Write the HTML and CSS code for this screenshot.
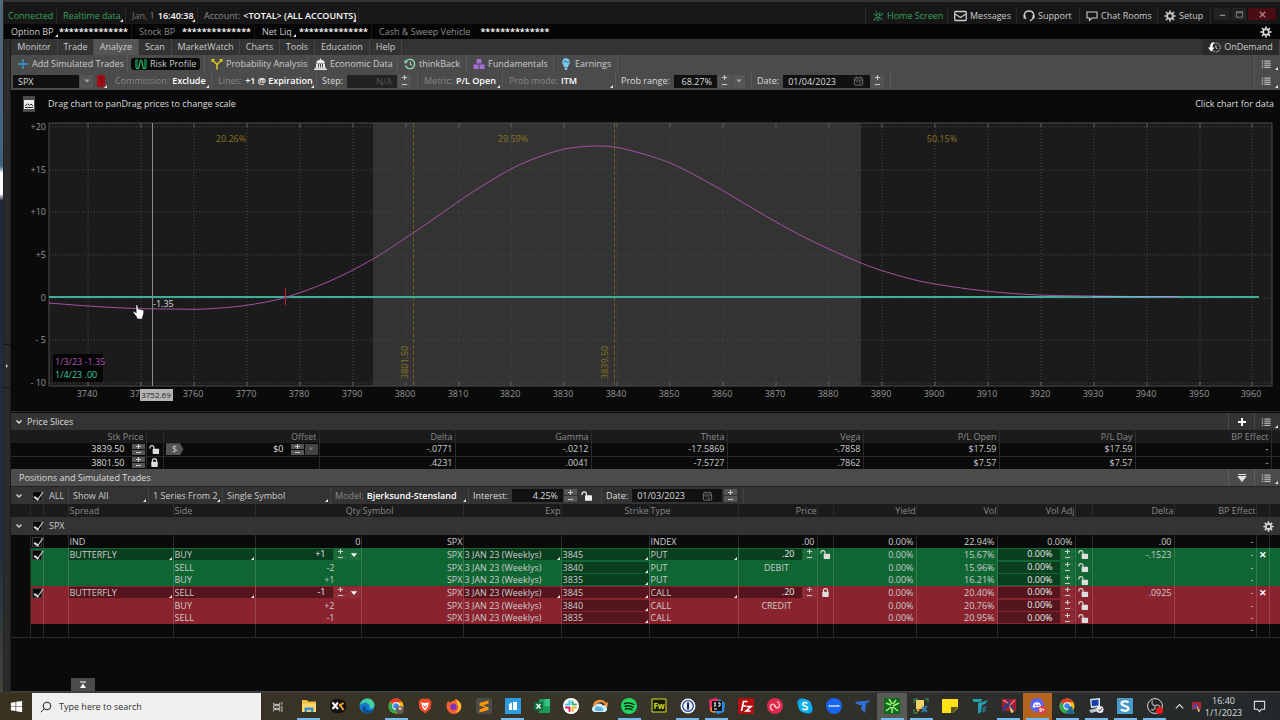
FILE: index.html
```html
<!DOCTYPE html>
<html lang="en">
<head>
    <meta charset="UTF-8">
    <meta name="viewport" content="width=device-width, initial-scale=1.0">
    <title>Risk Profile</title>
    <link rel="stylesheet" href="styles.css">
</head>
<body>
    <svg class="defs" width="0" height="0" aria-hidden="true">
        <symbol id="i-list" viewBox="0 0 12 12"><path d="M1 2.500h1.600M1 5h1.600M1 7.500h1.600M1 10h1.600M4 2.500h7.500M4 5h7.500M4 7.500h7.500M4 10h7.500" stroke="currentColor" stroke-width="1.100"/></symbol>
        <symbol id="i-gear" viewBox="0 0 12 12"><circle cx="6" cy="6" r="2.900" fill="none" stroke="currentColor" stroke-width="1.800"/><path d="M6 .4v2M6 9.600v2M.4 6h2M9.600 6h2M2 2l1.500 1.500M8.500 8.500L10 10M2 10l1.500-1.500M8.500 3.500L10 2" stroke="currentColor" stroke-width="1.700"/></symbol>
        <symbol id="i-lock" viewBox="0 0 12 12"><path d="M3.700 6V4a2.300 2.300 0 0 1 4.600 0v2" fill="none" stroke="currentColor" stroke-width="1.300"/><rect x="2.500" y="5.300" width="7" height="5.500" rx=".6" fill="currentColor"/></symbol>
        <symbol id="i-unlock" viewBox="0 0 12 12"><path d="M1 5V4a2.200 2.200 0 0 1 4.400 0v2" fill="none" stroke="currentColor" stroke-width="1.200"/><rect x="4" y="5.300" width="7" height="5.500" rx=".6" fill="currentColor"/></symbol>
        <symbol id="i-cal" viewBox="0 0 12 12"><rect x="1.500" y="2.500" width="9" height="8" rx="1" fill="none" stroke="currentColor"/><path d="M1.500 5h9M3.500 1v2M8.500 1v2M3.500 7h2M6.500 7h2M6.500 9h2" stroke="currentColor"/></symbol>
        <symbol id="i-down" viewBox="0 0 8 8"><path d="M1.500 2.500h5L4 5.500z" fill="currentColor"/></symbol>
        <symbol id="i-chev" viewBox="0 0 8 8"><path d="M1.500 2.500L4 5l2.500-2.500" fill="none" stroke="currentColor" stroke-width="1.500"/></symbol>
        <symbol id="i-spark" viewBox="0 0 12 12"><path d="M6 6.500V11M7 6l4-2M7 7.500l3.500 2M5 7l-3.500 3.500M5 5.500L1.500 4M5.500 4.500L4 1M6.800 4.500L8.500 2" stroke="currentColor" stroke-width="1.200" stroke-dasharray="2 .6" fill="none"/></symbol>
        <symbol id="i-chrome" viewBox="0 0 16 16"><circle cx="8" cy="8" r="7.500" fill="#fbc116"/><path d="M8 8L1.500 4.300A7.500 7.500 0 0 1 14.500 4.300H8z" fill="#e33b2e"/><path d="M8 8L1.500 4.300A7.500 7.500 0 0 0 7.500 15.500L11 9.500z" fill="#2da94f"/><circle cx="8" cy="8" r="3.700" fill="#fff"/><circle cx="8" cy="8" r="2.800" fill="#4285f4"/></symbol>
    </svg>

    <div class="shell">
        <div class="desktop-edge"></div>
        <div class="app">
            <header class="bar status-bar">
                <span class="cell green">Connected</span>
                <button class="cell drop green">Realtime data</button>
                <button class="cell drop dim">Jan, 1 <b>16:40:38</b></button>
                <button class="cell drop mid">Account: <b>&lt;TOTAL&gt; (ALL ACCOUNTS)</b></button>
                <span class="cell"></span>
                <button class="cell green"><svg class="icon"><use href="#i-spark"/></svg>Home Screen</button>
                <button class="cell"><svg class="icon icon-wide" viewBox="0 0 13 11"><rect x=".7" y="1" width="11.600" height="9" rx="1" fill="none" stroke="currentColor" stroke-width="1.300"/><path d="M1 3.500l5.500 3.500L12 3.500" fill="none" stroke="currentColor" stroke-width="1.300"/></svg>Messages</button>
                <button class="cell"><svg class="icon" viewBox="0 0 12 12"><path d="M3 9C0 6 1 1 6 1s6 5 3.500 8L7 11" fill="none" stroke="currentColor" stroke-width="1.300"/><path d="M1.500 5v3.500M10.500 5v3.500" stroke="currentColor" stroke-width="2"/></svg>Support</button>
                <button class="cell"><svg class="icon" viewBox="0 0 12 12"><path d="M1 2h10v6H6L3.500 10.500V8H1z" fill="none" stroke="currentColor" stroke-width="1.100"/></svg>Chat Rooms</button>
                <button class="cell"><svg class="icon"><use href="#i-gear"/></svg>Setup</button>
                <div class="window-buttons">
                    <button aria-label="Minimize"><svg viewBox="0 0 10 10"><path d="M2 6h6" stroke="currentColor" stroke-width="1.500"/></svg></button>
                    <button aria-label="Maximize"><svg viewBox="0 0 10 10"><path d="M1.500 2h7v6h-7z M1.500 3h7" fill="none" stroke="currentColor"/></svg></button>
                    <button class="close" aria-label="Close"><svg viewBox="0 0 10 10"><path d="M2 2l6 6M8 2L2 8" stroke="currentColor" stroke-width="1.500"/></svg></button>
                </div>
            </header>

            <div class="bar balance-bar">
                <button class="cell"><span class="drop">Option BP</span><b>**************</b></button>
                <span class="cell mid"><span>Stock BP</span><b>**************</b></span>
                <button class="cell"><span class="drop">Net Liq</span><b>**************</b></button>
                <span class="cell mid last"><span>Cash &amp; Sweep Vehicle</span><b>**************</b></span>
                <button class="bare" aria-label="Balance settings"><svg class="icon"><use href="#i-gear"/></svg></button>
            </div>

            <div class="workspace">
                <aside class="gutter"><button aria-label="Expand sidebar"><svg viewBox="0 0 4 6"><path d="M1 1l2 2-2 2z" fill="#ccc"/></svg></button></aside>
                <main class="main">
                    <nav class="bar menu-bar">
                        <a href="#">Monitor</a>
                        <a href="#">Trade</a>
                        <a href="#" class="active">Analyze</a>
                        <a href="#">Scan</a>
                        <a href="#">MarketWatch</a>
                        <a href="#">Charts</a>
                        <a href="#">Tools</a>
                        <a href="#">Education</a>
                        <a href="#">Help</a>
                        <span></span>
                        <a href="#" class="ondemand"><svg class="icon icon-wide" viewBox="0 0 14 12"><circle cx="8.500" cy="6.500" r="4.800" fill="none" stroke="currentColor" stroke-dasharray="2 .7"/><path d="M8.500 4v3l2 1" fill="none" stroke="currentColor"/><path d="M7 .5C3.500.5 2 3.500 2.300 6.500H0l3.500 4.500L7 6.500H5C4.800 4 5.500 2 7 .5z" fill="#fff"/></svg>OnDemand</a>
                    </nav>

                    <nav class="bar sub-tabs">
                        <button class="cell"><svg class="icon" viewBox="0 0 12 12"><path d="M6 1v10M1 6h10" stroke="#2f9fd0" stroke-width="1.400"/></svg>Add Simulated Trades</button>
                        <div class="cell pill-cell"><button class="pill"><svg class="icon" viewBox="0 0 12 12"><path d="M0 1h3v9H0zM9 1h3v9H9z" fill="#0e6b35"/><path d="M1 10.500h2.500C5 8 4.500 2 6 2s1 6 2.500 8.500H11" fill="none" stroke="#28c066" stroke-width="1.200"/></svg>Risk Profile</button></div>
                        <button class="cell"><svg class="icon" viewBox="0 0 12 12"><path d="M6 11.500V6.500L2 2.500M6 6.500l4-4" fill="none" stroke="#e3d021" stroke-width="1.500"/><path d="M.5 4.500V1H4zM11.500 4.500V1H8z" fill="#e3d021"/></svg>Probability Analysis</button>
                        <button class="cell"><svg class="icon icon-wide" viewBox="0 0 13 12"><path d="M2 5.500C2 3 4 2 6 1.700V.5h1v1.200C9 2 11 3 11 5.500zM2 6h2v3.500H2zM5 6h1v3.500H5zM7 6h1v3.500H7zM9 6h2v3.500H9zM1 9.500h11v1H1zM0 10.800h13V12H0z" fill="#e8e8e8"/></svg>Economic Data</button>
                        <button class="cell"><svg class="icon" viewBox="0 0 12 12"><path d="M2 3.500A4.700 4.700 0 1 1 1.500 7.500" fill="none" stroke="#8fd8b2" stroke-width="1.400"/><path d="M6.300 3.500v3l2 1" fill="none" stroke="#8fd8b2" stroke-width="1.200"/><path d="M.3 2l.5 4L4 4z" fill="#8fd8b2"/></svg>thinkBack</button>
                        <button class="cell"><svg class="icon" viewBox="0 0 12 12"><path d="M3.500 1h5v4.500h-5zM.5 6.500h5V11h-5zM6.500 6.500h5V11h-5z" fill="#a56edb"/></svg>Fundamentals</button>
                        <button class="cell"><svg class="icon" viewBox="0 0 12 12"><path d="M6 0a4.300 4.300 0 0 1 2.500 7.500L8 9H4l-.5-1.500A4.300 4.300 0 0 1 6 0zM4.500 9.500h3v1L6.800 12H5.200l-.7-1.500z" fill="#7cc6e8"/><path d="M3.500 4l2-1 2 1.500L9 3.500" fill="none" stroke="#256b91"/></svg>Earnings</button>
                        <span class="cell"></span>
                        <button class="bare drop" aria-label="Tab menu"><svg class="icon list"><use href="#i-list"/></svg></button>
                    </nav>

                    <div class="bar tools">
                        <div class="combo">
                            <input class="field grow" value="SPX" aria-label="Symbol">
                            <button class="box-button" aria-label="Symbol list"><svg class="mini"><use href="#i-down"/></svg></button>
                        </div>
                        <div class="cell link-cell drop"><button class="link-badge">1</button></div>
                        <label class="cell drop faint">Commission:<select class="strong"><option>Exclude</option></select></label>
                        <label class="cell drop faint">Lines:<select class="strong"><option>+1 @ Expiration</option></select></label>
                        <div class="cell tight">
                            <label for="step">Step:</label>
                            <input id="step" class="field num grow disabled" value="N/A" disabled>
                            <span class="spin"><button class="plus" aria-label="Increase"></button><button class="minus" aria-label="Decrease"></button></span>
                        </div>
                        <label class="cell drop faint">Metric:<select class="strong"><option>P/L Open</option></select></label>
                        <label class="cell drop faint">Prob mode:<select class="strong"><option>ITM</option></select></label>
                        <div class="cell tight">
                            <label for="range">Prob range:</label>
                            <input id="range" class="field num grow" value="68.27%">
                            <span class="spin"><button class="plus" aria-label="Increase"></button><button class="minus" aria-label="Decrease"></button></span>
                            <button class="box-button" aria-label="Range list"><svg class="mini"><use href="#i-down"/></svg></button>
                        </div>
                        <div class="cell tight">
                            <label for="date-top">Date:</label>
                            <span class="date-field grow"><input id="date-top" class="field" value="01/04/2023"><svg class="icon cal"><use href="#i-cal"/></svg></span>
                            <span class="spin"><button class="plus" aria-label="Increase"></button><button class="minus" aria-label="Decrease"></button></span>
                        </div>
                        <span class="cell"></span>
                        <button class="bare drop" aria-label="Chart menu"><svg class="icon list"><use href="#i-list"/></svg></button>
                    </div>

                    <section class="chart-panel">
                        <div class="chart-hints">
                            <button class="bare shot" aria-label="Snapshot"><svg viewBox="0 0 12 16"><rect width="12" height="16" fill="#4a4a4a"/><rect x="1" y="4" width="10" height="9" fill="#eee"/><path d="M2 10l2.500-2 2 1.500L8 8l2 2" fill="none" stroke="#222"/><path d="M2 11.500h8" stroke="#222"/></svg></button>
                            <span class="grow">Drag chart to panDrag prices to change scale</span>
                            <span>Click chart for data</span>
                        </div>
                        <svg class="chart" viewBox="11 118 1269 293" role="img" aria-label="Profit and loss by underlying price">
                            <rect x="49" y="123" width="1223" height="263" fill="#1b1b1b"/>
                            <rect x="373" y="123" width="488" height="263" fill="#333"/>
                            <g id="grid"></g>
                            <rect x="49" y="123" width="1223" height="263" fill="none" stroke="#4d4d4d"/>
                            <g class="prob">
                                <path d="M413.500 123v263M614.500 123v263" stroke="#6e5c18" stroke-dasharray="4 2"/>
                                <text x="231" y="142" text-anchor="middle">20.26%</text>
                                <text x="513" y="142" text-anchor="middle">29.59%</text>
                                <text x="942" y="142" text-anchor="middle">50.15%</text>
                                <text transform="translate(408 379) rotate(-90)">3801.50</text>
                                <text transform="translate(608 379) rotate(-90)">3839.50</text>
                            </g>
                            <path d="M49 297h1210" stroke="#3fae97" stroke-width="2"/>
                            <path id="curve" fill="none" stroke="#a352a6"/>
                            <path d="M1092 296.500h86" stroke="#86a6d8"/>
                            <path d="M285.500 288v17" stroke="#c81e2e"/>
                            <path d="M152.500 123v263" stroke="#8a8a8a"/>
                            <text class="readout" x="153" y="307">-1.35</text>
                            <rect x="53" y="354" width="50" height="28" rx="2" fill="#050505"/>
                            <text x="55" y="365" fill="#b455b8">1/3/23 -1.35</text>
                            <text x="55" y="378" fill="#3fcaa6">1/4/23 .00</text>
                            <g id="axis" class="axis"></g>
                            <rect x="140" y="389" width="33" height="12" fill="#b5b5b5"/>
                            <text class="tag" x="156" y="398" text-anchor="middle">3752.69</text>
                            <path d="M136 305c1.500-.5 2 .5 2.200 4l5 1c1 .5.500 4-.7 7l-.3 2h-5l-.5-2-3.500-4.500c0-1.500 1.500-1 3 .5z" fill="#fff" stroke="#111" stroke-width=".5"/>
                        </svg>
                    </section>

                    <section>
                        <div class="bar section-head dark">
                            <svg class="mini"><use href="#i-chev"/></svg>
                            <h2>Price Slices</h2>
                            <button class="bare" aria-label="Add slice"><svg class="icon" viewBox="0 0 12 12"><path d="M6 2v8M2 6h8" stroke="#fff" stroke-width="2"/></svg></button>
                            <button class="bare drop" aria-label="Slices menu"><svg class="icon list"><use href="#i-list"/></svg></button>
                        </div>
                        <table class="slices">
                            <colgroup><col class="c135"><col class="c17"><col class="c156"><col class="c136"><col class="c136"><col class="c136"><col class="c136"><col class="c136"><col class="c136"><col class="c136"><col class="c9"></colgroup>
                            <thead>
                                <tr><th>Stk Price</th><th></th><th>Offset</th><th>Delta</th><th>Gamma</th><th>Theta</th><th>Vega</th><th>P/L Open</th><th>P/L Day</th><th>BP Effect</th><th></th></tr>
                            </thead>
                            <tbody>
                                <tr>
                                    <td><div class="edit"><input class="plain num grow" value="3839.50" aria-label="Stock price 1"><span class="spin"><button class="plus" aria-label="Increase"></button><button class="minus" aria-label="Decrease"></button></span></div></td>
                                    <td class="mark"><svg class="icon"><use href="#i-unlock"/></svg></td>
                                    <td><div class="edit"><button class="dollar">$</button><input class="plain num grow" value="$0" aria-label="Offset"><span class="spin"><button class="plus" aria-label="Increase"></button><button class="minus" aria-label="Decrease"></button></span><button class="box-button" aria-label="Offset list"><svg class="mini"><use href="#i-down"/></svg></button></div></td>
                                    <td>-.0771</td><td>-.0212</td><td>-17.5869</td><td>-.7858</td><td>$17.59</td><td>$17.59</td><td>-</td><td></td>
                                </tr>
                                <tr>
                                    <td><div class="edit"><input class="plain num grow" value="3801.50" aria-label="Stock price 2"><span class="spin"><button class="plus" aria-label="Increase"></button><button class="minus" aria-label="Decrease"></button></span></div></td>
                                    <td class="mark"><svg class="icon"><use href="#i-lock"/></svg></td>
                                    <td></td>
                                    <td>.4231</td><td>.0041</td><td>-7.5727</td><td>.7862</td><td>$7.57</td><td>$7.57</td><td>-</td><td></td>
                                </tr>
                            </tbody>
                        </table>
                    </section>

                    <section class="positions">
                        <div class="bar section-head">
                            <h2>Positions and Simulated Trades</h2>
                            <button class="bare" aria-label="Collapse"><svg class="icon" viewBox="0 0 12 12"><path d="M2 2.500h8M2 4.500L6 9.500l4-5z" fill="currentColor" stroke="currentColor"/></svg></button>
                            <button class="bare drop" aria-label="Positions menu"><svg class="icon list"><use href="#i-list"/></svg></button>
                        </div>
                        <div class="bar filters">
                            <label class="cell all"><svg class="mini"><use href="#i-chev"/></svg><input type="checkbox" checked>ALL</label>
                            <div class="cell drop"><select aria-label="Show"><option>Show All</option></select></div>
                            <div class="cell drop"><select aria-label="Series"><option>1 Series From 2</option></select></div>
                            <div class="cell drop"><select aria-label="Symbols"><option>Single Symbol</option></select></div>
                            <label class="cell drop faint">Model:<select class="strong"><option>Bjerksund-Stensland</option></select></label>
                            <div class="cell tight">
                                <label for="interest">Interest:</label>
                                <input id="interest" class="field num grow" value="4.25%">
                                <span class="spin"><button class="plus" aria-label="Increase"></button><button class="minus" aria-label="Decrease"></button></span>
                                <button class="lock-button" aria-label="Lock interest"><svg class="icon"><use href="#i-unlock"/></svg></button>
                            </div>
                            <div class="cell tight">
                                <label for="date-pos">Date:</label>
                                <span class="date-field grow"><input id="date-pos" class="field" value="01/03/2023"><svg class="icon cal"><use href="#i-cal"/></svg></span>
                                <span class="spin"><button class="plus" aria-label="Increase"></button><button class="minus" aria-label="Decrease"></button></span>
                            </div>
                        </div>
                        <table class="legs">
                            <colgroup><col class="c19"><col class="c13"><col class="c25"><col class="c105"><col class="c82"><col class="c106"><col class="c102"><col class="c98"><col class="c88"><col class="c89"><col class="c79"><col class="c16"><col class="c83"><col class="c81"><col class="c78"><col class="c17"><col class="c82"><col class="c82"><col class="c13"><col class="c11"></colgroup>
                            <thead>
                                <tr><th></th><th></th><th></th><th class="left">Spread</th><th class="left">Side</th><th>Qty</th><th class="left">Symbol</th><th>Exp</th><th>Strike</th><th class="left">Type</th><th>Price</th><th></th><th>Yield</th><th>Vol</th><th>Vol Adj</th><th></th><th>Delta</th><th>BP Effect</th><th></th><th></th></tr>
                            </thead>
                            <tbody id="legs"></tbody>
                        </table>
                        <div class="bottom">
                            <button class="expand" aria-label="Expand panel"><svg viewBox="0 0 12 10"><path d="M3 2h6" stroke="#fff"/><path d="M6 3.500L9 8H3z" fill="#fff"/></svg></button>
                        </div>
                    </section>
                </main>
            </div>
        </div>
    </div>

    <footer class="taskbar">
        <button class="start" aria-label="Start"><svg viewBox="0 0 16 16"><path d="M2 4l5-.8v4.500H2zM7.700 3l6.300-1v5.700H7.700zM2 8.300h5v4.500L2 12zM7.700 8.300H14V14l-6.300-1z" fill="#fff"/></svg></button>
        <label class="search">
            <svg viewBox="0 0 12 12"><circle cx="7" cy="5" r="3.800" fill="none" stroke="#222"/><path d="M4.300 7.700L.8 11.200" stroke="#222"/></svg>
            <input type="text" placeholder="Type here to search" aria-label="Search">
        </label>
        <button class="task-view" aria-label="Task view"><svg viewBox="0 0 16 16"><path d="M3 3v2h7V3M3 13v-2h7v2M3 6.500h7v3H3zM12.500 2.500v3M12.500 7v6.500" fill="none" stroke="#ddd"/></svg></button>
        <div class="tasks">
            <button class="on"><svg viewBox="0 0 16 16"><path d="M1 2h5l1 1.500h8V14H1z" fill="#f0bd3c"/><path d="M1 5.500h14V14H1z" fill="#fbd968"/><path d="M3.500 14V9.500h9V14h-2.500v-2H6v2z" fill="#3f8fd0"/></svg></button>
            <button><svg viewBox="0 0 16 16"><rect y="1" width="16" height="14" rx="6" fill="#111"/><path d="M2.500 4.500L8 11M8 4.500L2.500 11" stroke="#fff" stroke-width="2"/><path d="M9 8l4.500-3M9.500 6l4 6" stroke="#f0a030" stroke-width="2"/></svg></button>
            <button><svg viewBox="0 0 16 16"><circle cx="8" cy="8" r="7.500" fill="#1479cf"/><path d="M.7 7C2 2.500 5.500.5 8.500.5c4.500 0 7 3.500 7 6.500s-3 4-5 3.500C12 7 8 4 4.500 5 2 5.500 1 7 .7 7z" fill="#42d1a0"/><path d="M6.500 8.500C6 11 9 14 14 12c-2.500 4-8 4-10 1s0-5.500 2.500-4.500z" fill="#0c4f94"/></svg></button>
            <button class="on"><svg viewBox="0 0 16 16"><use href="#i-chrome"/><circle cx="12" cy="12" r="4" fill="#665c58"/><circle cx="12" cy="10.500" r="1.700" fill="#d9b7a3"/></svg></button>
            <button><svg viewBox="0 0 16 16"><path d="M4 .8h8l2.500 3-1 7L8 15.500l-5.500-4.700-1-7z" fill="#f4492a"/><path d="M4 4.500L8 5l4-.5-1.500 5L8 12.500 5.500 9.500z" fill="#fff"/><path d="M6.500 7.500L8 10l1.500-2.500" fill="none" stroke="#f4492a"/></svg></button>
            <button><svg viewBox="0 0 16 16"><path d="M2 3l2 1.500C6 3 8 3 9.500 1c4 1.500 6 4.500 6 7.500a7.500 7.500 0 0 1-15 0C.5 6 1 4.500 2 3z" fill="#f5602e"/><path d="M10 1.500c4 2 5.500 5 5 8-.7 3-3 5-6 5 4-2 4-5 2.500-7.500z" fill="#ffc533"/><circle cx="7.500" cy="9" r="3.300" fill="#8135b8"/></svg></button>
            <button><svg viewBox="0 0 16 16"><rect width="16" height="16" rx="2" fill="#4b4b4b"/><path d="M12.500 2.500v3L7 7.500l5.500 2V12l-9 2.500v-3l5.500-2-5.500-2V5z" fill="#ff9800"/></svg></button>
            <button class="on"><svg viewBox="0 0 16 16"><path d="M0 0h16v16H0z" fill="#2d9bdf"/><path d="M4 6l3-1.500V12H4zM8 4h4v8H8z" fill="#fff"/></svg></button>
            <button><svg viewBox="0 0 16 16"><path d="M5 1h11v14H5z" fill="#1b9a58"/><path d="M10.500 1H16v7h-5.500z" fill="#35c481"/><path d="M0 4h9v8.500H0z" fill="#0e6b3a"/><path d="M2.500 6l4 4.500M6.500 6l-4 4.500" stroke="#fff" stroke-width="1.300"/></svg></button>
            <button><svg viewBox="0 0 16 16"><circle cx="8" cy="8" r="8" fill="#fff"/><g stroke-width="2" stroke-linecap="round"><path d="M6.500 3v3.500" stroke="#36c5f0"/><path d="M3 6.500h2" stroke="#36c5f0"/><path d="M9.500 3.500v3M11 6.500h2" stroke="#2eb67d"/><path d="M9.500 9.500h3.500M9.500 11v2" stroke="#ecb22e"/><path d="M3 9.500h3.500V13" fill="none" stroke="#e01e5a"/></g></svg></button>
            <button><svg viewBox="0 0 16 16"><path d="M1 8a7 6.500 0 0 1 13-3l2-1-.5 5-4-1.500 1.500-1A5 5 0 0 0 4 8z" fill="#f09440"/><path d="M3 14a3 3 0 0 1 0-6 4.500 4 0 0 1 8-.5 3.300 3.300 0 0 1 1.500 6.500z" fill="#d5eefa"/><path d="M4 13a3 2.500 0 0 1 4-4 3 3 0 0 1 3 4z" fill="#5db5df"/></svg></button>
            <button class="on"><svg viewBox="0 0 16 16"><circle cx="8" cy="8" r="8" fill="#1ed760"/><path d="M3.500 5.500c3-1 6.500-.7 9.500 1M4 8.300c2.500-.8 5.500-.5 8 1M4.500 11c2-.6 4.500-.4 6.500.7" fill="none" stroke="#111" stroke-width="1.400" stroke-linecap="round"/></svg></button>
            <button><svg viewBox="0 0 16 16"><path d="M1 1h14v13H1z" fill="#1b1c08" stroke="#d6e02a"/><text x="8" y="11" class="fw" text-anchor="middle">Fw</text></svg></button>
            <button class="on"><svg viewBox="0 0 16 16"><circle cx="8" cy="8" r="7.500" fill="#eef3fb"/><circle cx="8" cy="8" r="5.300" fill="none" stroke="#27458c" stroke-width="1.300"/><path d="M7 4.500h2v7H7z" fill="#15234a"/></svg></button>
            <button class="on"><svg viewBox="0 0 16 16"><path d="M0 2l7-2 4 3-5 10-5 1z" fill="#f02e6a"/><path d="M10 1l6 4-1 9-6 2-5-3z" fill="#2191f0"/><path d="M1 9l5 1v5l-4-1z" fill="#fb8b32"/><path d="M3 3h10v10H3z" fill="#111"/><path d="M5 5h2M6 5v3M5 8h2M9 5h2v3H9M5 11h3" stroke="#fff" fill="none"/></svg></button>
            <button><svg viewBox="0 0 16 16"><path d="M0 0h16v16H0z" fill="#b01010"/><path d="M3.500 13l2-9.500H9.500M4.500 8H8M8.500 8.500h4.500L8 13h4.500" fill="none" stroke="#fff" stroke-width="1.600"/></svg></button>
            <button><svg viewBox="0 0 16 16"><circle cx="8" cy="8" r="8" fill="#dc2a4c"/><path d="M4 10a2.300 2.300 0 0 1 3.500-3L9 8.500M12 6a2.300 2.300 0 0 1-3.500 3L7 7.500M6 12.500c-2-1-3-3-2-5M10 3.500c2 1 3 3 2 5" fill="none" stroke="#f9c9d2" stroke-width="1.200"/></svg></button>
            <button><svg viewBox="0 0 16 16"><circle cx="5" cy="5" r="4.800" fill="#0b9de0"/><circle cx="11" cy="11" r="4.800" fill="#0b9de0"/><circle cx="8" cy="8" r="6.800" fill="#0db0ee"/><path d="M10.500 5.500C9 4 5.800 4.300 5.800 6.200c0 2.300 4.700 1.300 4.700 3.700 0 2-3.500 2.300-5 .5" fill="none" stroke="#fff" stroke-width="1.600"/></svg></button>
            <button><svg viewBox="0 0 16 16"><circle cx="8" cy="8" r="8" fill="#1667ee"/><text x="8" y="9" class="zoom-mark" text-anchor="middle">zoom</text></svg></button>
            <button><svg viewBox="0 0 16 16"><path d="M0 4c3 0 4-1 7-1s4 0 8-1c-1 2-2 3-4 3.500L10 15l-4-4 1-4C4 7 2 7 0 4z" fill="#2e70d8"/></svg></button>
            <button class="on lit"><svg viewBox="0 0 16 16"><path d="M0 0h16v16H0z" fill="#0d6b1b"/><path d="M8 9v6M9 8l6-3M9 9l5 4M7 9l-5 4M7 7L2 5M8 6L5 1M9 6l3-4" stroke="#a9f37e" stroke-width="1.500"/></svg></button>
            <button class="on"><svg viewBox="0 0 16 16"><path d="M3 2h8v9H3z" fill="#f2d268"/><path d="M1 5V1h4M1 11v4h4M12 1h3v3" fill="none" stroke="#3ba35c"/><path d="M9 9l5 5M14 8l-5 6" stroke="#347eb0" stroke-width="2"/><circle cx="5" cy="12" r="1.500" fill="#e8a435"/></svg></button>
            <button><svg viewBox="0 0 16 16"><path d="M0 1h16v9l-5 5H0z" fill="#fbe116"/><path d="M9 9h7l-5 6H9z" fill="#5b5320"/></svg></button>
            <button><svg viewBox="0 0 16 16"><path d="M0 1h10l-1 3H2zM6 5l4-1 6-2-3 4-3 1-1 7-3 2V9z" fill="#249eae"/><path d="M11 9l4-1-2 3 1 2-4 2z" fill="#2b6f8d"/></svg></button>
            <button class="on"><svg viewBox="0 0 16 16"><path d="M1 1h14v12H1z" fill="#a51c2c"/><path d="M2 13L7 4l5 9" fill="none" stroke="#2e3a8c" stroke-width="3"/><path d="M8 7l5 7-3 1z" fill="#f6cf66"/><path d="M2 2l5 3M14 2l-5 5" stroke="#f06a78" stroke-width="1.500"/></svg></button>
            <button class="on alert"><svg viewBox="0 0 16 16"><circle cx="7" cy="7" r="7" fill="#5865f2"/><path d="M4 5c2-1 4-1 6 0l1.500 4-2 1-1-1h-3l-1 1-2-1z" fill="#fff"/><circle cx="5.700" cy="7.300" r=".9" fill="#5865f2"/><circle cx="8.500" cy="7.300" r=".9" fill="#5865f2"/><circle cx="12" cy="12" r="4" fill="#e23d4e"/><text x="12" y="14" class="nine" text-anchor="middle">9+</text></svg></button>
            <button class="on"><svg viewBox="0 0 16 16"><use href="#i-chrome"/><path d="M7 16a4.500 4.500 0 0 1 9 0z" fill="#25678f"/><circle cx="11.500" cy="10.500" r="2.300" fill="#25678f"/></svg></button>
            <button class="on"><svg viewBox="0 0 16 16"><path d="M2 1l10-1v9L3 10z" fill="#dce6ef"/><path d="M3.500 2.200l7-.7v6l-6.500.7z" fill="#1c3fb0"/><path d="M1 12l8-2 2 3-8 2z" fill="#b9c4ce"/><circle cx="12" cy="11.500" r="3.500" fill="#e9edf0"/><path d="M10 11.500l2 1.500 2-3" fill="none" stroke="#647"/></svg></button>
            <button class="on"><svg viewBox="0 0 16 16"><path d="M0 0h16v16H0z" fill="#4a9ac9"/><path d="M11.500 4.500C9 2.500 4.500 3 4.500 5.500c0 3 7 2 7 5 0 2.700-5 3-7.500.8" fill="none" stroke="#fff" stroke-width="2.200"/></svg></button>
            <button class="on"><svg viewBox="0 0 16 16"><circle cx="8" cy="8" r="7.400" fill="#222" stroke="#ddd"/><path d="M8 8C5 7 4 4 6 3M8 8c1 3-2 5-4 3M8 8c2-2 5-1 5 2" fill="none" stroke="#999" stroke-width="1.500"/><circle cx="12.500" cy="12.500" r="3.500" fill="#f01818"/></svg></button>
        </div>
        <div class="tray">
            <button aria-label="Hidden icons"><svg viewBox="0 0 12 12"><path d="M2 8l4-4 4 4" fill="none" stroke="#ddd" stroke-width="1.300"/></svg></button>
            <button aria-label="Tray app"><svg viewBox="0 0 12 12"><path d="M1 1h10v8H1z" fill="#b5232f"/><path d="M2 9l3-5 4 5" fill="none" stroke="#3953b8" stroke-width="2"/><path d="M6 5l4 6-2 1z" fill="#f6cf66"/></svg></button>
            <time class="clock">16:40<br>1/1/2023</time>
            <button class="notes" aria-label="Notifications"><svg viewBox="0 0 14 14"><path d="M1.500 1.500h11v8.500H9L7 12.500 5 10H1.500z" fill="none" stroke="#ddd" stroke-width="1.200"/></svg></button>
        </div>
    </footer>

    <script>
        const svgNS = 'http://www.w3.org/2000/svg';
        const grid = document.getElementById('grid');
        const axis = document.getElementById('axis');

        function add(parent, tag, attrs, text) {
            const el = document.createElementNS(svgNS, tag);
            Object.keys(attrs).forEach(key => el.setAttribute(key, attrs[key]));
            if (text) el.textContent = text;
            parent.appendChild(el);
        }

        // Vertical grid: one line per 10 points of the underlying
        for (let price = 3740; price <= 3960; price += 10) {
            const x = Math.round(88 + (price - 3740) * 5.293);
            add(grid, 'path', { d: `M${x} 127v259`, class: 'dots' });
            add(grid, 'path', { d: `M${x} 123v4M${x} 382v4`, class: 'tick' });
            add(axis, 'text', { x: x - 1, y: 397, 'text-anchor': 'middle' }, String(price));
        }

        // Horizontal grid: one line per 5 dollars
        for (let value = 20; value >= -10; value -= 5) {
            const y = Math.round(297.5 - value * 8.53);
            const label = value > 0 ? '+' + value : value < 0 ? '- ' + -value : '0';
            add(grid, 'path', { d: `M49 ${y}h1223`, class: 'dots' });
            add(axis, 'text', { x: 46, y: y + 3, 'text-anchor': 'end' }, label);
        }

        const points = [
            [49, 303], [88, 306], [135, 308.5], [175, 309], [205, 309], [245, 305.5], [285, 297.5],
            [330, 281], [373, 259], [413, 233], [440, 214.5], [475, 190.5], [517, 166], [555, 151.5],
            [575, 147.5], [597, 146], [620, 148], [655, 157.5], [680, 167.5], [720, 189], [770, 218.5],
            [810, 240], [861, 263], [900, 276], [935, 284], [990, 291.5], [1040, 295], [1092, 296], [1178, 297]
        ];

        function smooth(pts) {
            let d = `M${pts[0]}`;
            for (let i = 0; i < pts.length - 1; i++) {
                const p0 = pts[i - 1] || pts[i];
                const p1 = pts[i];
                const p2 = pts[i + 1];
                const p3 = pts[i + 2] || p2;
                d += `C${p1[0] + (p2[0] - p0[0]) / 6} ${p1[1] + (p2[1] - p0[1]) / 6} `;
                d += `${p2[0] - (p3[0] - p1[0]) / 6} ${p2[1] - (p3[1] - p1[1]) / 6} ${p2[0]} ${p2[1]}`;
            }
            return d;
        }

        document.getElementById('curve').setAttribute('d', smooth(points));

        const legs = [
            { tone: 'buy', spread: 'BUTTERFLY', side: 'BUY', qty: '+1', strike: 3845, type: 'PUT', price: '.20', lock: 'unlock', vol: '15.67%', delta: '-.1523' },
            { tone: 'buy', side: 'SELL', qty: '-2', strike: 3840, type: 'PUT', note: 'DEBIT', vol: '15.96%' },
            { tone: 'buy end', side: 'BUY', qty: '+1', strike: 3835, type: 'PUT', vol: '16.21%' },
            { tone: 'sell', spread: 'BUTTERFLY', side: 'SELL', qty: '-1', strike: 3845, type: 'CALL', price: '.20', lock: 'lock', vol: '20.40%', delta: '.0925' },
            { tone: 'sell', side: 'BUY', qty: '+2', strike: 3840, type: 'CALL', note: 'CREDIT', vol: '20.76%' },
            { tone: 'sell end', side: 'SELL', qty: '-1', strike: 3835, type: 'CALL', vol: '20.95%' }
        ];

        const icon = name => `<svg class="icon"><use href="#i-${name}"/></svg>`;
        const spin = '<span class="spin clear"><button class="plus" aria-label="Increase"></button><button class="minus" aria-label="Decrease"></button></span>';
        const pick = (value, label) => `<td><div class="pick drop"><select aria-label="${label}"><option>${value}</option></select></div></td>`;
        const edit = (value, label, extra) => `<td><div class="edit"><input class="shade num grow" value="${value}" aria-label="${label}">${spin}${extra || ''}</div></td>`;
        const left = value => `<td class="left">${value}</td>`;
        const exp = '3 JAN 23 (Weeklys)';

        function legRow(leg) {
            const first = Boolean(leg.spread);
            return `<tr class="${leg.tone}"><td></td>
                <td class="mark">${first ? '<input type="checkbox" checked aria-label="Include trade">' : ''}</td><td></td>
                ${first ? pick(leg.spread, 'Spread') : '<td></td>'}
                ${first ? pick(leg.side, 'Side') : left(leg.side)}
                ${first ? edit(leg.qty, 'Quantity', `<button class="more" aria-label="Quantity list">${icon('down')}</button>`) : `<td class="qty">${leg.qty}</td>`}
                <td class="flush">SPX</td>
                ${first ? pick(exp, 'Expiration') : left(exp)}
                ${pick(leg.strike, 'Strike')}
                ${first ? pick(leg.type, 'Type') : left(leg.type)}
                ${first ? edit(leg.price, 'Price') : `<td class="center">${leg.note || ''}</td>`}
                <td class="mark">${leg.lock ? icon(leg.lock) : ''}</td>
                <td>0.00%</td><td>${leg.vol}</td>${edit('0.00%', 'Vol adjust')}
                <td class="mark">${icon('unlock')}</td>
                <td class="delta">${leg.delta || ''}</td><td>-</td>
                <td class="mark">${first ? '<button class="remove" aria-label="Remove">✕</button>' : ''}</td><td></td></tr>`;
        }

        document.getElementById('legs').innerHTML = `
            <tr class="group"><td colspan="18"><label class="all"><svg class="mini"><use href="#i-chev"/></svg><input type="checkbox" checked>SPX</label></td>
                <td colspan="2" class="mark"><button class="bare" aria-label="Group settings">${icon('gear')}</button></td></tr>
            <tr><td></td><td class="mark"><input type="checkbox" checked aria-label="Include IND"></td><td></td>
                <td class="left">IND</td><td></td><td class="flush">0</td><td class="flush">SPX</td><td></td><td></td><td class="left">INDEX</td><td>.00</td><td></td>
                <td>0.00%</td><td>22.94%</td><td>0.00%</td><td></td><td>.00</td><td>-</td><td></td><td></td></tr>
            ${legs.map(legRow).join('')}
            <tr class="blank">${'<td></td>'.repeat(17)}<td>-</td><td></td><td></td></tr>`;
    </script>
</body>
</html>
```
FILE: styles.css
```css
* {
    box-sizing: border-box;
}

body {
    margin: 0;
    min-height: 100vh;
    display: flex;
    flex-direction: column;
    background: #0a0a0a;
    color: #ccc;
    font-family: "Open Sans", "Noto Sans", sans-serif;
    font-size: 9px;
    line-height: 12px;
}

button,
input,
select {
    margin: 0;
    padding: 0;
    border: 0;
    border-radius: 0;
    background: none;
    color: inherit;
    font: inherit;
    white-space: nowrap;
}

select {
    appearance: none;
}

a {
    color: inherit;
    text-decoration: none;
}

h2 {
    flex: 1;
    margin: 0;
    font-size: 9px;
    font-weight: 400;
}

b,
.strong {
    color: #fff;
    font-weight: 600;
}

.defs {
    position: absolute;
}

.shell {
    flex: 1;
    display: flex;
}

.desktop-edge {
    width: 3px;
    background: linear-gradient(#52667a 0, #41627f 24%, #fff 25%, #fff 28%, #1c2b3a 29%, #20303f 80%, #45443c);
}

.app {
    flex: 1;
    min-width: 0;
    display: flex;
    flex-direction: column;
    border-top: 2px solid #333;
    border-left: 1px solid #222;
}

.workspace {
    flex: 1;
    display: flex;
}

.gutter {
    width: 7px;
    display: flex;
    align-items: center;
    background: #2b2b2b;
    border-right: 1px solid #1a1a1a;
}

.gutter button {
    width: 6px;
    height: 44px;
    border: solid #151515;
    border-width: 1px 0;
    line-height: 0;
}

.gutter svg {
    width: 4px;
    height: 6px;
}

.main {
    flex: 1;
    min-width: 0;
    display: flex;
    flex-direction: column;
}

/* bars */

.bar {
    display: grid;
    align-items: stretch;
}

.cell {
    display: flex;
    align-items: center;
    gap: 3px;
    padding-left: 6px;
    border-right: 1px solid rgba(255, 255, 255, 0.08);
    text-align: left;
    white-space: nowrap;
    min-width: 0;
}

.drop {
    position: relative;
}

/* corner mark of everything that opens a menu */
.drop::after {
    content: "";
    position: absolute;
    right: 2px;
    bottom: 2px;
    border-left: 3px solid transparent;
    border-bottom: 3px solid #eee;
}

.green {
    color: #35a062;
}

.mid {
    color: #8c8c8c;
}

.dim {
    color: #777;
}

.faint {
    color: #858585;
}

.icon {
    width: 12px;
    height: 12px;
    flex: none;
}

.icon-wide {
    width: 13px;
}

.icon.list {
    width: 10px;
    height: 10px;
    margin-right: 4px;
}

.mini {
    width: 8px;
    height: 8px;
    flex: none;
}

.bare {
    display: flex;
    align-items: center;
    justify-content: center;
    color: #ddd;
}

.status-bar {
    grid-template-columns: 53px 69px 72px 161px 1fr 82px 69px 63px 78px 53px 69px;
    height: 22px;
    padding-top: 5px;
    background: #171717;
}

.status-bar .cell:first-child {
    padding-left: 4px;
}

.window-buttons {
    display: flex;
    padding: 1px 3px 4px;
    color: #888;
}

.window-buttons button {
    width: 17px;
    background: #222;
    border-right: 1px solid #111;
    line-height: 0;
}

.window-buttons .close {
    flex: 1;
    background: #4a0d14;
    color: #a87c80;
}

.window-buttons svg {
    width: 9px;
    height: 9px;
}

.balance-bar {
    grid-template-columns: 128px 123px 117px 1fr 28px;
    height: 15px;
    background: #050505;
}

.balance-bar .cell {
    justify-content: space-between;
    padding: 0 3px 0 7px;
}

.balance-bar .cell.last {
    justify-content: flex-start;
    gap: 10px;
    border: 0;
}

.balance-bar .drop::after {
    right: -4px;
    bottom: 1px;
}

.menu-bar {
    grid-template-columns: 47px 36px 45px 33px 68px 40px 35px 55px 32px 1fr 78px;
    height: 16px;
    background: #333;
}

.menu-bar a {
    display: flex;
    align-items: center;
    justify-content: center;
    gap: 3px;
    border-right: 1px solid #444;
}

.menu-bar .active {
    background: #555;
}

.menu-bar .ondemand {
    background: #2a2a2a;
}

.sub-tabs {
    grid-template-columns: 117px 77px 103px 90px 69px 87px 64px 1fr 25px;
    height: 17px;
    background: #4b4b4b;
}

.pill-cell {
    padding-left: 3px;
}

.pill {
    display: flex;
    align-items: center;
    gap: 3px;
    padding: 0 4px;
    border-radius: 3px;
    background: #080808;
}

.tools {
    grid-template-columns: 85px 13px 103px 105px 101px 85px 113px 136px 139px 1fr 25px;
    height: 18px;
    background: #4b4b4b;
}

.grow {
    flex: 1;
    min-width: 0;
}

.combo {
    display: flex;
    align-items: center;
    padding: 0 3px 0 2px;
}

.field {
    height: 13px;
    padding: 0 5px;
    background: #111;
    color: #ddd;
}

.num {
    text-align: right;
}

.disabled {
    background: #222;
    color: #555;
}

.tight {
    gap: 0;
    padding: 0 6px 0 5px;
}

.tight label {
    margin-right: 4px;
    color: #ddd;
}

.date-field {
    display: flex;
    align-items: center;
    background: #111;
    color: #777;
}

.date-field .field {
    width: 70px;
}

.cal {
    width: 11px;
}

.spin {
    width: 13px;
    height: 13px;
    margin-left: 1px;
    flex: none;
    display: flex;
    flex-direction: column;
    gap: 1px;
}

/* plus and minus signs are drawn with centred bars */
.plus,
.minus {
    flex: 1;
    background-color: #555;
    background-position: center;
    background-repeat: no-repeat;
    background-image: linear-gradient(#ccc, #ccc);
    background-size: 5px 1px;
}

.plus {
    background-image: linear-gradient(#ccc, #ccc), linear-gradient(#ccc, #ccc);
    background-size: 5px 1px, 1px 5px;
}

.box-button {
    width: 13px;
    height: 13px;
    margin-left: 1px;
    flex: none;
    background: #555;
    color: #aaa;
    line-height: 0;
}

.link-cell {
    padding: 0 4px 0 1px;
    border: 0;
}

.link-badge {
    width: 8px;
    height: 12px;
    border-radius: 2px;
    background: #a30d19;
    color: #5c060d;
}

/* chart */

.chart-panel {
    background: #0a0a0a;
    border-bottom: 1px solid #2b2b2b;
    margin-bottom: 1px;
}

.chart-hints {
    display: flex;
    align-items: center;
    height: 28px;
    padding: 0 6px 0 12px;
    color: #ddd;
}

.shot {
    width: 12px;
    margin-right: 13px;
}

.chart {
    display: block;
    width: 100%;
    font-size: 9px;
}

.chart .dots {
    fill: none;
    stroke: #484848;
    stroke-dasharray: 1 2;
}

.chart .tick {
    stroke: #666;
}

.axis {
    fill: #999;
}

.prob {
    fill: #8a7320;
}

.prob path {
    fill: none;
}

.readout {
    fill: #ddd;
}

.chart .tag {
    fill: #222;
    font-size: 8px;
}

/* sections and tables */

.section-head {
    display: flex;
    height: 17px;
    align-items: center;
    padding-left: 8px;
    background: #4b4b4b;
    color: #ddd;
}

.section-head.dark {
    padding-left: 4px;
    background: #333;
}

.section-head .mini {
    margin-right: 4px;
}

.section-head .bare {
    align-self: stretch;
    width: 26px;
    border-left: 1px solid rgba(255, 255, 255, 0.1);
}

table {
    width: 100%;
    table-layout: fixed;
    border-collapse: collapse;
    background: #0a0a0a;
}

th,
td {
    height: 13px;
    padding: 0 2px 0 0;
    border-right: 1px solid #2b2b2b;
    text-align: right;
    font-weight: 400;
    white-space: nowrap;
}

thead {
    background: #1b1b1b;
    color: #888;
}

.slices tbody tr + tr {
    border-top: 1px solid #2a2a2a;
}

.slices th:last-child,
.slices td:last-child {
    border: 0;
}

.mark {
    padding: 0;
    text-align: center;
    line-height: 0;
}

.mark .icon {
    width: 11px;
    height: 11px;
    color: #ddd;
}

.edit {
    display: flex;
    align-items: center;
    height: 12px;
}

.edit .spin {
    height: 11px;
}

.plain {
    padding-right: 6px;
    color: #ddd;
}

.slices td:first-child,
.slices td:nth-child(3) {
    padding-right: 1px;
}

.dollar {
    width: 18px;
    height: 12px;
    margin-left: 2px;
    background: #555;
    clip-path: polygon(0 0, 80% 0, 100% 50%, 80% 100%, 0 100%);
}

.slices .box-button {
    height: 11px;
    background: #444;
    color: #777;
}

.positions {
    flex: 1;
    display: flex;
    flex-direction: column;
}

.filters {
    grid-template-columns: 58px 80px 74px 108px 138px 133px 142px 1fr;
    height: 18px;
    border-top: 1px solid #222;
    background: #333;
}

.filters .cell {
    padding-left: 4px;
}

.filters .all,
.all {
    display: flex;
    align-items: center;
    gap: 0;
    padding-left: 4px;
}

.all input {
    margin: 0 7px 0 9px;
}

.lock-button {
    margin: 0 2px 0 4px;
    line-height: 0;
    color: #eee;
}

.filters .date-field + .spin {
    margin-left: 2px;
}

input[type="checkbox"] {
    appearance: none;
    position: relative;
    width: 10px;
    height: 10px;
    border: 1px solid #3c3c3c;
    background: #080808;
    vertical-align: top;
}

input[type="checkbox"]:checked::after {
    content: "";
    position: absolute;
    left: 3px;
    top: -2px;
    width: 4px;
    height: 8px;
    border: solid #ddd;
    border-width: 0 1px 2px 0;
    transform: rotate(35deg);
}

.legs th {
    padding-right: 0;
}

.legs .left {
    padding-left: 1px;
    text-align: left;
}

.legs .flush {
    padding-right: 0;
}

.legs .center {
    text-align: center;
}

.legs td:first-child {
    background: #0a0a0a;
}

.legs .group td {
    height: 18px;
    border: 0;
    background: #333;
}

.legs .group .bare {
    margin: 0 auto;
}

.legs .buy {
    background: #0f6632;
}

.legs .sell {
    background: #8a232e;
}

.legs .buy td,
.legs .sell td {
    border-right-color: rgba(255, 255, 255, 0.15);
}

.legs .buy td:first-child,
.legs .sell td:first-child {
    border-right-color: #2b2b2b;
}

.legs .end td {
    height: 12px;
}

.legs td:has(.pick),
.legs td:has(.edit) {
    padding: 0;
}

.pick {
    height: 12px;
    padding-left: 1px;
    background: rgba(0, 0, 0, 0.38) content-box;
    border-bottom: 1px solid transparent;
    background-clip: padding-box;
    text-align: left;
    line-height: 0;
}

.pick.drop::after {
    right: 1px;
    bottom: 0;
}

.pick select {
    width: 100%;
    height: 12px;
    line-height: 12px;
}

.shade {
    height: 12px;
    padding-right: 7px;
    background: rgba(0, 0, 0, 0.38) padding-box;
    border-bottom: 1px solid transparent;
    color: #eee;
}

.clear {
    margin-right: 1px;
}

.clear button {
    background-color: rgba(255, 255, 255, 0.05);
}

.more {
    width: 13px;
    height: 11px;
    color: #fff;
    background: rgba(255, 255, 255, 0.05);
    line-height: 0;
}

.more .icon {
    width: 10px;
    height: 10px;
}

.legs .qty {
    padding-right: 26px;
}

.remove {
    color: #fff;
    font-weight: 700;
    line-height: 12px;
}

.blank {
    border-bottom: 1px solid #2b2b2b;
}

.bottom {
    flex: 1;
    display: flex;
    align-items: flex-end;
    padding-left: 60px;
    border-bottom: 1px solid #444;
}

.expand {
    width: 24px;
    height: 13px;
    background: #4b4b4b;
    line-height: 0;
}

.expand svg {
    width: 12px;
    height: 10px;
}

.c9 { width: 9px; }
.c11 { width: 11px; }
.c13 { width: 13px; }
.c16 { width: 16px; }
.c17 { width: 17px; }
.c19 { width: 19px; }
.c25 { width: 25px; }
.c78 { width: 78px; }
.c79 { width: 79px; }
.c81 { width: 81px; }
.c82 { width: 82px; }
.c83 { width: 83px; }
.c88 { width: 88px; }
.c89 { width: 89px; }
.c98 { width: 98px; }
.c102 { width: 102px; }
.c105 { width: 105px; }
.c106 { width: 106px; }
.c135 { width: 135px; }
.c136 { width: 136px; }
.c156 { width: 156px; }

/* taskbar */

.taskbar {
    display: flex;
    height: 28px;
    background: linear-gradient(90deg, #38321f, #38352a 50%, #23282b);
    border-top: 1px solid #3a3a3a;
}

.taskbar button {
    display: flex;
    align-items: center;
    justify-content: center;
}

.start {
    width: 32px;
}

.start svg {
    width: 15px;
    height: 15px;
}

.search {
    display: flex;
    align-items: center;
    width: 229px;
    padding-left: 8px;
    background: #f0f0f0;
}

.search svg {
    width: 12px;
    height: 12px;
    margin-right: 7px;
}

.search input {
    flex: 1;
    color: #222;
}

.search input::placeholder {
    color: #333;
}

.task-view {
    width: 33px;
}

.task-view svg {
    width: 14px;
    height: 14px;
}

.tasks {
    flex: 1;
    display: flex;
}

.tasks button {
    flex: 1;
    border-bottom: 2px solid transparent;
}

.tasks svg {
    width: 16px;
    height: 16px;
}

.tasks .on {
    background: linear-gradient(#76b9ed, #76b9ed) bottom / 23px 2px no-repeat border-box;
}

.tasks .lit {
    background-color: rgba(255, 255, 255, 0.2);
}

.tasks .alert {
    background-color: #b3641f;
}

.fw {
    fill: #d6e02a;
    font-size: 8px;
    font-weight: 700;
}

.zoom-mark {
    fill: #fff;
    font-size: 4px;
    font-weight: 700;
}

.nine {
    fill: #fff;
    font-size: 5px;
    font-weight: 700;
}

.tray {
    display: flex;
    align-items: center;
    width: 111px;
    padding-left: 2px;
    color: #ddd;
}

.tray button {
    width: 17px;
}

.tray svg {
    width: 11px;
    height: 11px;
}

.clock {
    flex: 1;
    text-align: center;
}

.tray .notes {
    width: 34px;
    margin-right: 4px;
}

.tray .notes svg {
    width: 13px;
    height: 13px;
}
```
